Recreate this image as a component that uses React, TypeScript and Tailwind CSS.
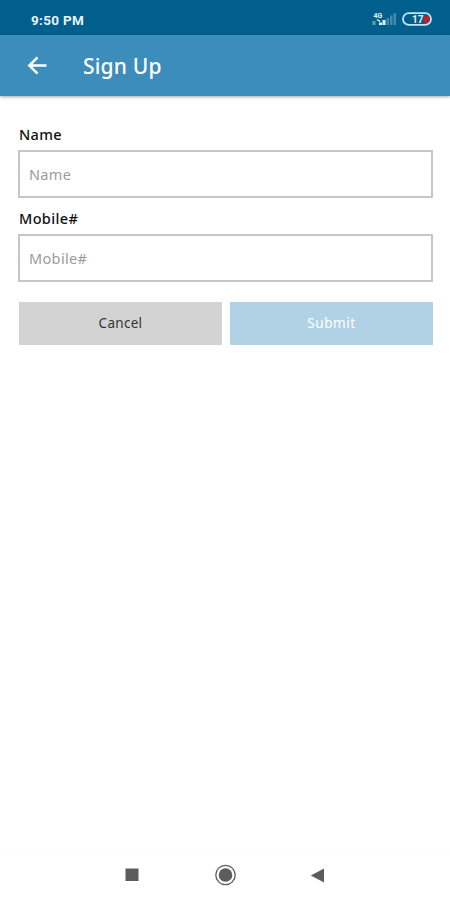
import { useState } from "react"

type FieldProps = {
  id: string
  label: string
  value: string
  onChange: (value: string) => void
}

function Field({ id, label, value, onChange }: FieldProps) {
  return (
    <div>
      <label
        htmlFor={id}
        className="block h-5 pl-px text-[14.5px] leading-5 font-medium tracking-[0.35px] text-[#111]"
      >
        {label}
      </label>
      <input
        id={id}
        placeholder={label}
        value={value}
        onChange={(e) => onChange(e.target.value)}
        className="mt-1.5 block h-12 w-full border-2 border-[#c6c6c6] bg-white px-[9px] pb-px text-[14.5px] tracking-[0.35px] text-[#1c1c1c] outline-none placeholder:text-[#9b9b9b]"
      />
    </div>
  )
}

function StatusBar() {
  return (
    <div className="flex h-[35px] items-center justify-between bg-[#005f8c] pt-1 pr-[18px] pl-[31px]">
      <span className="font-['Roboto',sans-serif] text-[13.5px] leading-4 font-bold tracking-[0.3px] text-[#e6f3fb]">
        9:50 PM
      </span>
      <div className="-mt-px flex items-center gap-[5px]">
        {/* Signal strength */}
        <svg width="25" height="14" viewBox="0 0 25 14">
          <text x="1.5" y="6" fontFamily="Roboto, sans-serif" fontSize="7" fontWeight="700" fill="#e6f3fb">4G</text>
          <rect x="0.5" y="9" width="3" height="4" fill="#5f9dbd" />
          <path d="M5 7.5l3 2" stroke="#e6f3fb" strokeWidth="1.5" />
          <rect x="7" y="10.5" width="3" height="2.5" fill="#e6f3fb" />
          <rect x="10.5" y="8" width="3" height="5" fill="#e6f3fb" />
          <rect x="14.5" y="6" width="2.5" height="7" fill="#4689ad" />
          <rect x="18" y="3.5" width="2.5" height="9.5" fill="#4689ad" />
          <rect x="21.5" y="1" width="2.5" height="12" fill="#4689ad" />
        </svg>
        {/* Battery */}
        <svg width="30" height="14" viewBox="0 0 30 14">
          <rect x="1" y="1.2" width="28" height="11.6" rx="5.8" fill="none" stroke="#c6e3f3" strokeWidth="1.8" />
          <path d="M22 3.2h1.5a3.8 3.8 0 0 1 0 7.6H22z" fill="#d5161e" />
          <text x="10" y="10.6" fontFamily="Roboto, sans-serif" fontSize="10" fontWeight="700" fill="#e6f3fb">17</text>
        </svg>
      </div>
    </div>
  )
}

function Header() {
  return (
    <header className="flex h-[61px] items-center bg-[#3c8dbc] pl-[27px] text-white shadow-[0_1px_3px_rgba(0,0,0,0.35)]">
      <button aria-label="Back">
        <svg width="21" height="20" viewBox="0 0 21 20" fill="none" stroke="currentColor" strokeWidth="2.5">
          <path d="M19.5 9.5H2.5M10.5 1.3L2.3 9.5l8.2 8.2" />
        </svg>
      </button>
      <h1 className="ml-[35px] text-[21px] leading-7 font-medium tracking-[0.2px]">Sign Up</h1>
    </header>
  )
}

function NavBar() {
  return (
    <nav className="flex h-[49px] items-center border-t border-[#fafafa] pb-0.5 pl-[125px]">
      <svg width="14" height="14" viewBox="0 0 14 14">
        <rect x="0.5" y="0.5" width="13" height="12.5" fill="#5c5c5c" />
      </svg>
      <svg className="ml-[76px]" width="22" height="22" viewBox="0 0 22 22">
        <circle cx="10.5" cy="11" r="9.7" fill="none" stroke="#5c5c5c" strokeWidth="1.3" />
        <circle cx="10.5" cy="11" r="6.8" fill="#5c5c5c" />
      </svg>
      <svg className="ml-[73px]" width="15" height="15" viewBox="0 0 15 15">
        <path d="M14 0.5v14L0.8 7.5z" fill="#5c5c5c" />
      </svg>
    </nav>
  )
}

export default function App() {
  const [name, setName] = useState("")
  const [mobile, setMobile] = useState("")

  return (
    <div className="flex h-[900px] w-[450px] flex-col bg-white font-['Noto_Sans','Open_Sans',sans-serif]">
      <StatusBar />
      <Header />

      <main className="flex-1 pt-7 pr-[17px] pl-[18px]">
        <form onSubmit={(e) => e.preventDefault()}>
          <div className="space-y-2.5">
            <Field id="name" label="Name" value={name} onChange={setName} />
            <Field id="mobile" label="Mobile#" value={mobile} onChange={setMobile} />
          </div>

          <div className="mt-5 grid grid-cols-2 gap-2 pl-px">
            <button type="button" className="h-[43px] bg-[#d3d3d3] text-[13.5px] tracking-[0.3px] text-[#333]">
              Cancel
            </button>
            <button type="submit" className="h-[43px] bg-[#b1d1e4] text-[13.5px] tracking-[0.6px] text-white">
              Submit
            </button>
          </div>
        </form>
      </main>

      <NavBar />
    </div>
  )
}
